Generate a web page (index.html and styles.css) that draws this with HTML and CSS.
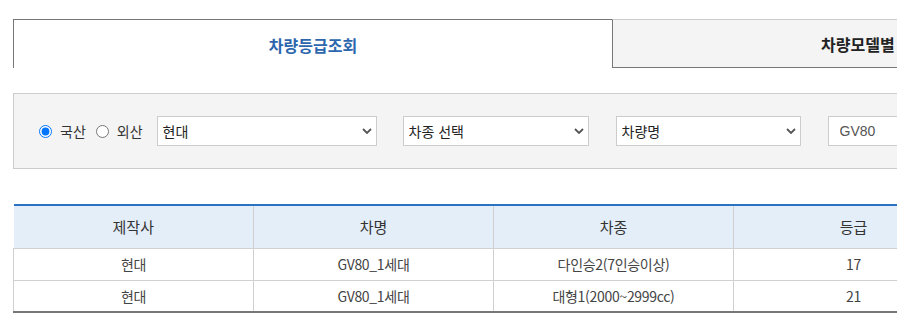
FILE: index.html
```html
<!DOCTYPE html>
<html lang="ko">
<head>
<meta charset="utf-8">
<link rel="stylesheet" href="styles.css">
</head>
<body>
<div class="page">
  <div class="tabs">
    <div class="tab active">차량등급조회</div>
    <div class="tab second">차량모델별 등급조회</div>
  </div>

  <div class="search">
    <label class="radio"><input type="radio" name="origin" checked><span>국산</span></label>
    <label class="radio"><input type="radio" name="origin"><span>외산</span></label>
    <div class="sel sel-maker">
      <select><option>현대</option></select>
      <svg class="chev" width="10" height="6" viewBox="0 0 10 6"><path d="M1 1 L5 5 L9 1" fill="none" stroke="#555" stroke-width="1.8"/></svg>
    </div>
    <div class="sel sel-type">
      <select><option>차종 선택</option></select>
      <svg class="chev" width="10" height="6" viewBox="0 0 10 6"><path d="M1 1 L5 5 L9 1" fill="none" stroke="#555" stroke-width="1.8"/></svg>
    </div>
    <div class="sel sel-name">
      <select><option>차량명</option></select>
      <svg class="chev" width="10" height="6" viewBox="0 0 10 6"><path d="M1 1 L5 5 L9 1" fill="none" stroke="#555" stroke-width="1.8"/></svg>
    </div>
    <input class="keyword" type="text" value="GV80">
  </div>

  <table class="grid">
    <thead>
      <tr><th>제작사</th><th>차명</th><th>차종</th><th>등급</th><th>비고</th></tr>
    </thead>
    <tbody>
      <tr><td>현대</td><td>GV80_1세대</td><td>다인승2(7인승이상)</td><td>17</td><td></td></tr>
      <tr><td>현대</td><td>GV80_1세대</td><td>대형1(2000~2999cc)</td><td>21</td><td></td></tr>
    </tbody>
  </table>
</div>
</body>
</html>
```

FILE: styles.css
```css
html, body {
  margin: 0;
  padding: 0;
  overflow: hidden;
  background: #fff;
}
body {
  font-family: "Noto Sans CJK KR", "Noto Sans", sans-serif;
  color: #333;
}
.page {
  width: 1200px;
  padding: 19px 0 0 13px;
}
.tabs {
  display: flex;
  height: 49px;
}
.tab {
  box-sizing: border-box;
  width: 600px;
  display: flex;
  align-items: center;
  justify-content: center;
  font-size: 16px;
  font-weight: 700;
  color: #222;
  background: #f4f4f4;
  border-top: 1px solid #ccc;
  border-left: 1px solid #777;
  border-bottom: 1px solid #777;
  padding-top: 1px;
}
.tab.second {
  width: 554px;
}
.tab.active {
  width: 599px;
  background: #fff;
  color: #2c67ad;
  border-top: 1px solid #777;
  border-bottom: none;
}
.search {
  box-sizing: border-box;
  margin-top: 25px;
  height: 76px;
  width: 1200px;
  background: #f4f4f4;
  border: 1px solid #ccc;
  display: flex;
  align-items: center;
  padding-left: 25px;
}
.radio {
  display: flex;
  align-items: center;
  font-size: 14px;
  color: #333;
  margin-right: 9px;
}
.radio input {
  margin: 0 8px 0 0;
  width: 13px;
  height: 13px;
}
.radio + .radio { margin-left: 1px; margin-right: 14px; }
.sel {
  position: relative;
  height: 30px;
}
.sel select {
  appearance: none;
  -webkit-appearance: none;
  box-sizing: border-box;
  width: 100%;
  height: 30px;
  border: 1px solid #ccc;
  background: #fff;
  font-family: inherit;
  font-size: 14px;
  color: #222;
  padding: 0 0 0 5px;
  border-radius: 0;
  outline: none;
}
.chev {
  position: absolute;
  right: 5px;
  top: 12px;
  pointer-events: none;
}
.sel-maker { width: 220px; margin-right: 26px; }
.sel-type { width: 186px; margin-right: 27px; }
.sel-name { width: 185px; margin-right: 27px; }
.keyword {
  box-sizing: border-box;
  width: 200px;
  height: 30px;
  border: 1px solid #ccc;
  background: #fff;
  font-family: "Liberation Sans", "Noto Sans CJK KR", sans-serif;
  font-size: 14px;
  color: #555;
  padding: 0 0 0 11px;
  margin: 0;
  border-radius: 0;
}
.grid {
  margin-top: 35px;
  border-collapse: collapse;
  table-layout: fixed;
  width: 1200px;
  border-top: 2px solid #2b72c2;
  border-bottom: 2px solid #777;
}
.grid th, .grid td {
  width: 240px;
  text-align: center;
  padding: 0;
  border-left: 1px solid #d0d0d0;
  box-sizing: border-box;
}
.grid th {
  height: 43px;
  background: #e4eef9;
  font-weight: 400;
  font-size: 15px;
  color: #333;
  border-bottom: 1px solid #d0d0d0;
}
.grid th:first-child { border-left: none; }
.grid td {
  height: 32px;
  font-size: 14px;
  color: #444;
  border-bottom: 1px solid #d0d0d0;
  letter-spacing: -0.3px;
}
```
